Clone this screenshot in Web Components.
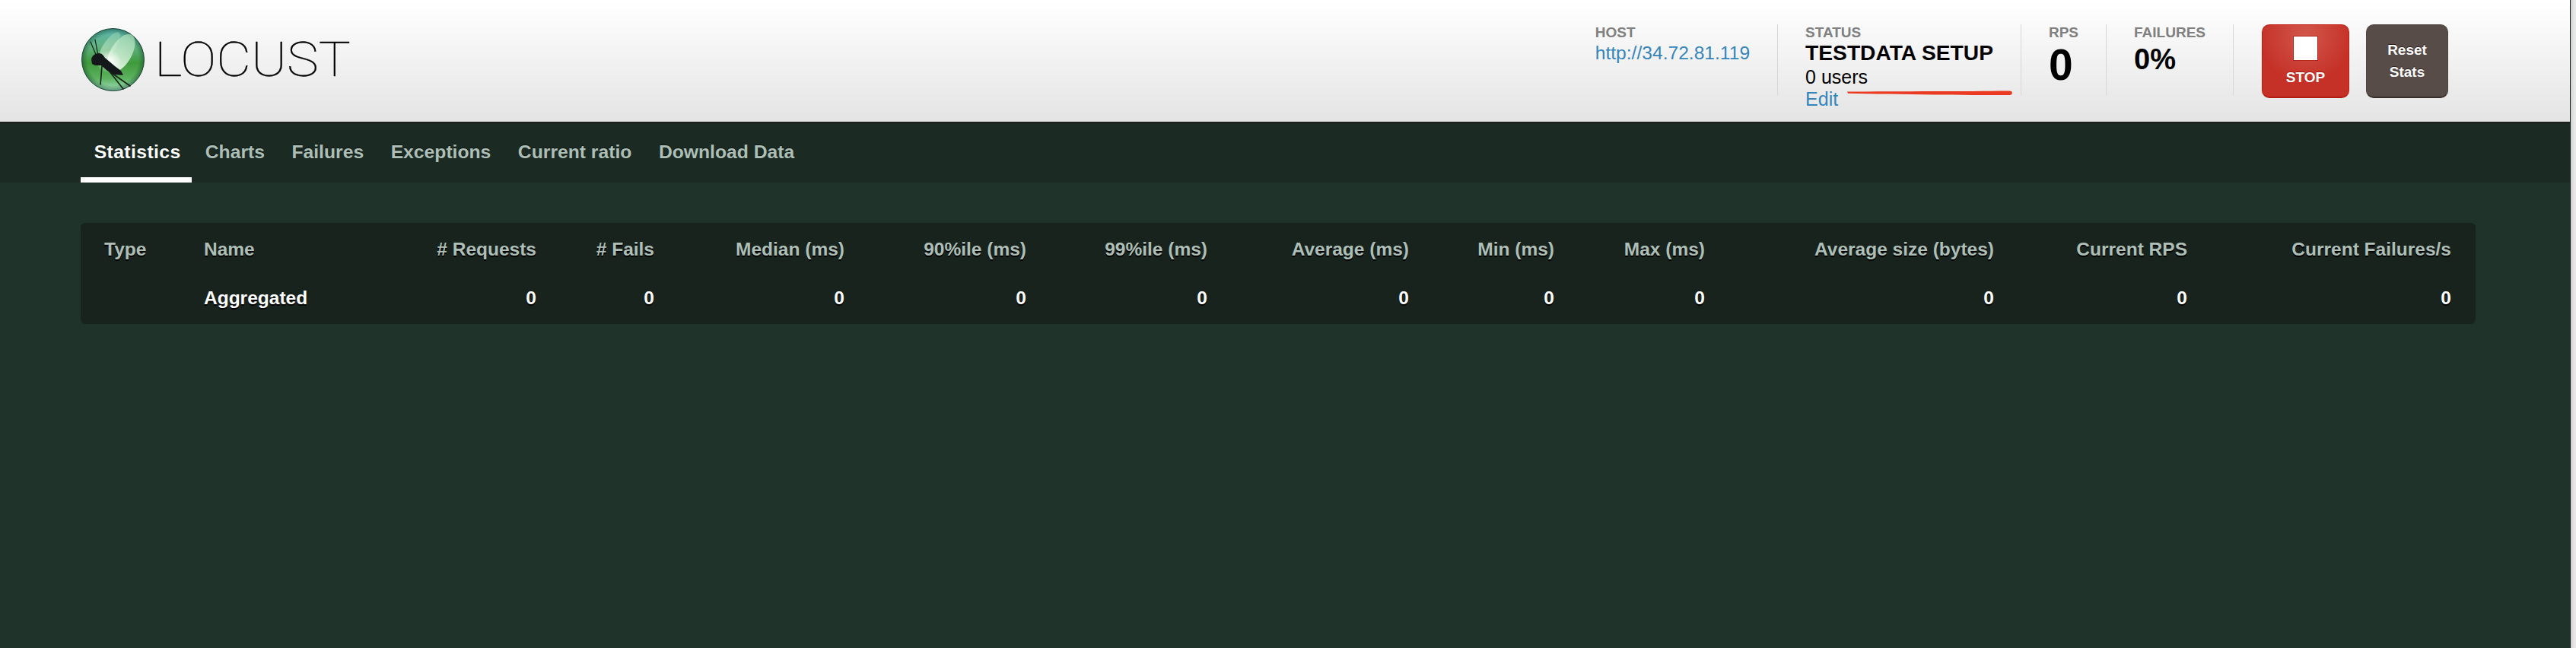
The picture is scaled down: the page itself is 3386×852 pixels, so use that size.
<!DOCTYPE html>
<html>
<head>
<meta charset="utf-8">
<title>Locust</title>
<style>
  html, body { margin: 0; height: 100%; overflow: hidden; background: #e2e2e2; }
  body { font-family: "Liberation Sans", Arial, sans-serif; }
</style>
</head>
<body>
<locust-app>
  <locust-header slot="header">
    <locust-stat label="Host"><a-link big style="font-size:24.6px">http://34.72.81.119</a-link></locust-stat>
    <locust-stat label="Status" annotated>
      <div style="font-size:28.2px;font-weight:bold;line-height:31px;color:#000">TESTDATA SETUP</div>
      <div style="font-size:25px;line-height:33px;color:#000">0 users</div>
      <a-link style="line-height:24px">Edit</a-link>
    </locust-stat>
    <locust-stat label="RPS"><div style="font-size:57px;font-weight:bold;line-height:54px;margin-top:4px;color:#000">0</div></locust-stat>
    <locust-stat label="Failures"><div style="font-size:38px;font-weight:bold;line-height:40px;margin-top:4px;color:#000">0%</div></locust-stat>
  </locust-header>
  <locust-tabs slot="tabs"></locust-tabs>
  <stats-table></stats-table>
</locust-app>

<script>
class LocustApp extends HTMLElement {
  constructor() {
    super();
    this.attachShadow({ mode: 'open' });
    this.shadowRoot.innerHTML = `
      <style>
        :host {
          display: flex;
          height: 852px;
          width: 3386px;
        }
        .page {
          flex: 1;
          min-width: 0;
          display: flex;
          flex-direction: column;
          background: #20332b;
          border-right: 1px solid #14201b;
        }
        .content {
          padding: 53px 124px 0 106px;
        }
        .scrollbar {
          width: 7px;
          background: linear-gradient(to right, #cfcfcf, #e6e6e6 60%, #e9e9e9);
        }
      </style>
      <div class="page">
        <slot name="header"></slot>
        <slot name="tabs"></slot>
        <div class="content"><slot></slot></div>
      </div>
      <div class="scrollbar"></div>
    `;
  }
}
customElements.define('locust-app', LocustApp);

class ALink extends HTMLElement {
  constructor() {
    super();
    this.attachShadow({ mode: 'open' });
    this.shadowRoot.innerHTML = `
      <style>
        :host {
          display: block;
          color: #3585bb;
          font-size: 25px;
          white-space: nowrap;
        }
        :host([big]) { line-height: 32px; }
      </style>
      <slot></slot>
    `;
  }
}
customElements.define('a-link', ALink);

class LocustStat extends HTMLElement {
  constructor() {
    super();
    this.attachShadow({ mode: 'open' });
    this.shadowRoot.innerHTML = `
      <style>
        :host {
          display: block;
          position: relative;
          height: 93px;
          padding: 0 36px;
          border-right: 1px solid #d6d6d6;
          white-space: nowrap;
        }
        .label {
          font-size: 19px;
          line-height: 22px;
          font-weight: bold;
          text-transform: uppercase;
          color: #808080;
        }
        svg {
          position: absolute;
          left: 91px;
          top: 85px;
        }
      </style>
      <div class="label"></div>
      <slot></slot>
    `;
    if (this.hasAttribute('annotated')) {
      // hand drawn red stroke from the screenshot
      this.shadowRoot.innerHTML += `
        <svg width="218" height="10" viewBox="0 0 218 10">
          <path d="M0 3.6 C60 3.4 150 3 212 2.4 C216 2.4 217 3.4 216.8 5.2 C216.6 7.6 215 8 212 8 C150 8 60 7 1 5.8 Z" fill="#ea3a22"/>
        </svg>`;
    }
    this.shadowRoot.querySelector('.label').textContent = this.getAttribute('label');
  }
}
customElements.define('locust-stat', LocustStat);

class LocustLogo extends HTMLElement {
  constructor() {
    super();
    this.attachShadow({ mode: 'open' });
    this.shadowRoot.innerHTML = `
      <style>
        :host {
          display: flex;
          align-items: center;
          gap: 12px;
        }
        svg { display: block; }
        .word {
          font-family: "Roboto", "Lato", sans-serif;
          font-weight: 100;
          font-size: 63px;
          line-height: 64px;
          color: #000;
          -webkit-text-stroke: .3px #000;
          transform: scaleX(1.12);
          transform-origin: left center;
        }
      </style>
      <svg width="84" height="83" viewBox="0 0 84 83">
        <defs>
          <linearGradient id="ball" x1="0" y1="0" x2="0" y2="1">
            <stop offset="0" stop-color="#58b4ac"/>
            <stop offset=".28" stop-color="#62b383"/>
            <stop offset=".55" stop-color="#3f9a3c"/>
            <stop offset=".8" stop-color="#5cb25e"/>
            <stop offset="1" stop-color="#a3e0bd"/>
          </linearGradient>
          <radialGradient id="glow" cx="50%" cy="50%" r="50%">
            <stop offset="0" stop-color="#fff"/>
            <stop offset="1" stop-color="#fff" stop-opacity="0"/>
          </radialGradient>
          <radialGradient id="rim" cx="50%" cy="50%" r="50%">
            <stop offset=".82" stop-color="#0c3a28" stop-opacity="0"/>
            <stop offset="1" stop-color="#0c3a28" stop-opacity=".45"/>
          </radialGradient>
          <linearGradient id="wing" x1="0" y1="0" x2="0" y2="1">
            <stop offset="0" stop-color="#a8dcb4" stop-opacity=".7"/>
            <stop offset="1" stop-color="#f4fff4" stop-opacity=".95"/>
          </linearGradient>
        </defs>
        <circle cx="41.5" cy="41.5" r="41" fill="url(#ball)" stroke="#1d4a3a" stroke-width="1"/>
        <circle cx="41.5" cy="41.5" r="41" fill="url(#rim)"/>
        <ellipse cx="37" cy="24" rx="8" ry="22" transform="rotate(34 37 24)" fill="url(#wing)" opacity=".55"/>
        <ellipse cx="52" cy="33" rx="14" ry="28" transform="rotate(30 52 33)" fill="url(#wing)"/>
        <ellipse cx="36" cy="44" rx="17" ry="15" fill="url(#glow)"/>
        <g fill="none" stroke="#16201a" stroke-linecap="round">
          <path d="M20 37 L12 18" stroke-width="1.2"/>
          <path d="M22 36 L18 15" stroke-width="1.2"/>
          <path d="M27 50 L25 74" stroke-width="1.6"/>
          <path d="M37 57 L64 76" stroke-width="1.6"/>
          <path d="M37 57 L55 80" stroke-width="1.6"/>
        </g>
        <path d="M13 41 C14 36 18 33 23 33 C27 33 29 36 31 39 L44 50 L52 56 L55 62 L44 61 L34 56 L26 49 L18 49 L14 47 Z" fill="#14181a"/>
      </svg>
      <span class="word">LOCUST</span>
    `;
  }
}
customElements.define('locust-logo', LocustLogo);

class LocustHeader extends HTMLElement {
  constructor() {
    super();
    this.attachShadow({ mode: 'open' });
    this.shadowRoot.innerHTML = `
      <style>
        :host {
          display: flex;
          box-sizing: border-box;
          height: 162px;
          justify-content: space-between;
          padding: 0 160px 0 107px;
          background: linear-gradient(to bottom, #ffffff, #e4e4e4);
          border-bottom: 2px solid #1a1f1c;
        }
        locust-logo { margin-top: 37px; align-self: flex-start; }
        .right {
          display: flex;
          align-items: flex-start;
          padding-top: 32px;
        }
        .buttons {
          display: flex;
          gap: 22px;
          margin-left: 37px;
        }
        .btn {
          box-sizing: border-box;
          height: 97px;
          border-radius: 10px;
          color: #fff;
          font-weight: bold;
          font-size: 19px;
          text-align: center;
        }
        .stop {
          width: 115px;
          display: flex;
          flex-direction: column;
          align-items: center;
          padding-top: 14px;
          background: radial-gradient(circle at 50% 15%, #d2574c, #c53127 62%);
          border: 1px solid #c21f14;
          border-bottom: 2px solid #b31a10;
          text-shadow: 0 -1px 0 #9a1a10;
        }
        .square {
          width: 33px;
          height: 33px;
          box-sizing: border-box;
          background: #fff;
          border: 1px solid #b3241a;
          margin-bottom: 11px;
        }
        .reset {
          width: 108px;
          line-height: 29px;
          padding-top: 18px;
          background: #584c49;
          border: 1px solid #50453f;
          border-bottom: 2px solid #3a2c28;
          text-shadow: 0 -1px 0 #2c2220;
        }
      </style>
      <locust-logo></locust-logo>
      <div class="right">
        <slot></slot>
        <div class="buttons">
          <div class="btn stop"><div class="square"></div>STOP</div>
          <div class="btn reset">Reset<br>Stats</div>
        </div>
      </div>
    `;
  }
}
customElements.define('locust-header', LocustHeader);

class LocustTabs extends HTMLElement {
  constructor() {
    super();
    this.attachShadow({ mode: 'open' });
    const tabs = ['Statistics', 'Charts', 'Failures', 'Exceptions', 'Current ratio', 'Download Data'];
    this.shadowRoot.innerHTML = `
      <style>
        :host {
          display: flex;
          box-sizing: border-box;
          height: 78px;
          padding-left: 106px;
          background: #1b2a23;
        }
        .tab {
          height: 78px;
          box-sizing: border-box;
          padding: 23px 17.75px 0;
          font-size: 24.7px;
          line-height: 30px;
          font-weight: bold;
          color: #adbfb6;
          text-shadow: 0 -1px 0 #0c1410;
          white-space: nowrap;
        }
        .tab.active {
          width: 146px;
          letter-spacing: .4px;
          color: #fff;
          border-bottom: 7px solid #fff;
        }
      </style>
      ${tabs.map((t, i) => `<div class="tab${i === 0 ? ' active' : ''}">${t}</div>`).join('')}
    `;
  }
}
customElements.define('locust-tabs', LocustTabs);

class StatsTable extends HTMLElement {
  constructor() {
    super();
    this.attachShadow({ mode: 'open' });
    const heads = ['Type', 'Name', '# Requests', '# Fails', 'Median (ms)', '90%ile (ms)', '99%ile (ms)', 'Average (ms)', 'Min (ms)', 'Max (ms)', 'Average size (bytes)', 'Current RPS', 'Current Failures/s'];
    const row = ['', 'Aggregated', '0', '0', '0', '0', '0', '0', '0', '0', '0', '0', '0'];
    const cell = (t, i, cls) => `<div class="${cls}${i > 1 ? ' num' : ''}">${t}</div>`;
    this.shadowRoot.innerHTML = `
      <style>
        :host {
          display: grid;
          grid-template-columns: 131px 262px 175px 155px 250px 239px 238px 265px 191px 198px 380px 254px 347px;
          align-content: start;
          box-sizing: border-box;
          height: 133px;
          padding: 20px 32px 0 31px;
          background: #18231e;
          border-radius: 6px;
          font-size: 24.5px;
          font-weight: bold;
          white-space: nowrap;
        }
        .num { text-align: right; }
        .th {
          color: #adbfb6;
          line-height: 30px;
          height: 64px;
          text-shadow: 0 2px 0 #000;
        }
        .td {
          color: #fff;
          line-height: 30px;
          text-shadow: 0 2px 0 #000;
        }
      </style>
      ${heads.map((t, i) => cell(t, i, 'th')).join('')}
      ${row.map((t, i) => cell(t, i, 'td')).join('')}
    `;
  }
}
customElements.define('stats-table', StatsTable);
</script>
</body>
</html>
